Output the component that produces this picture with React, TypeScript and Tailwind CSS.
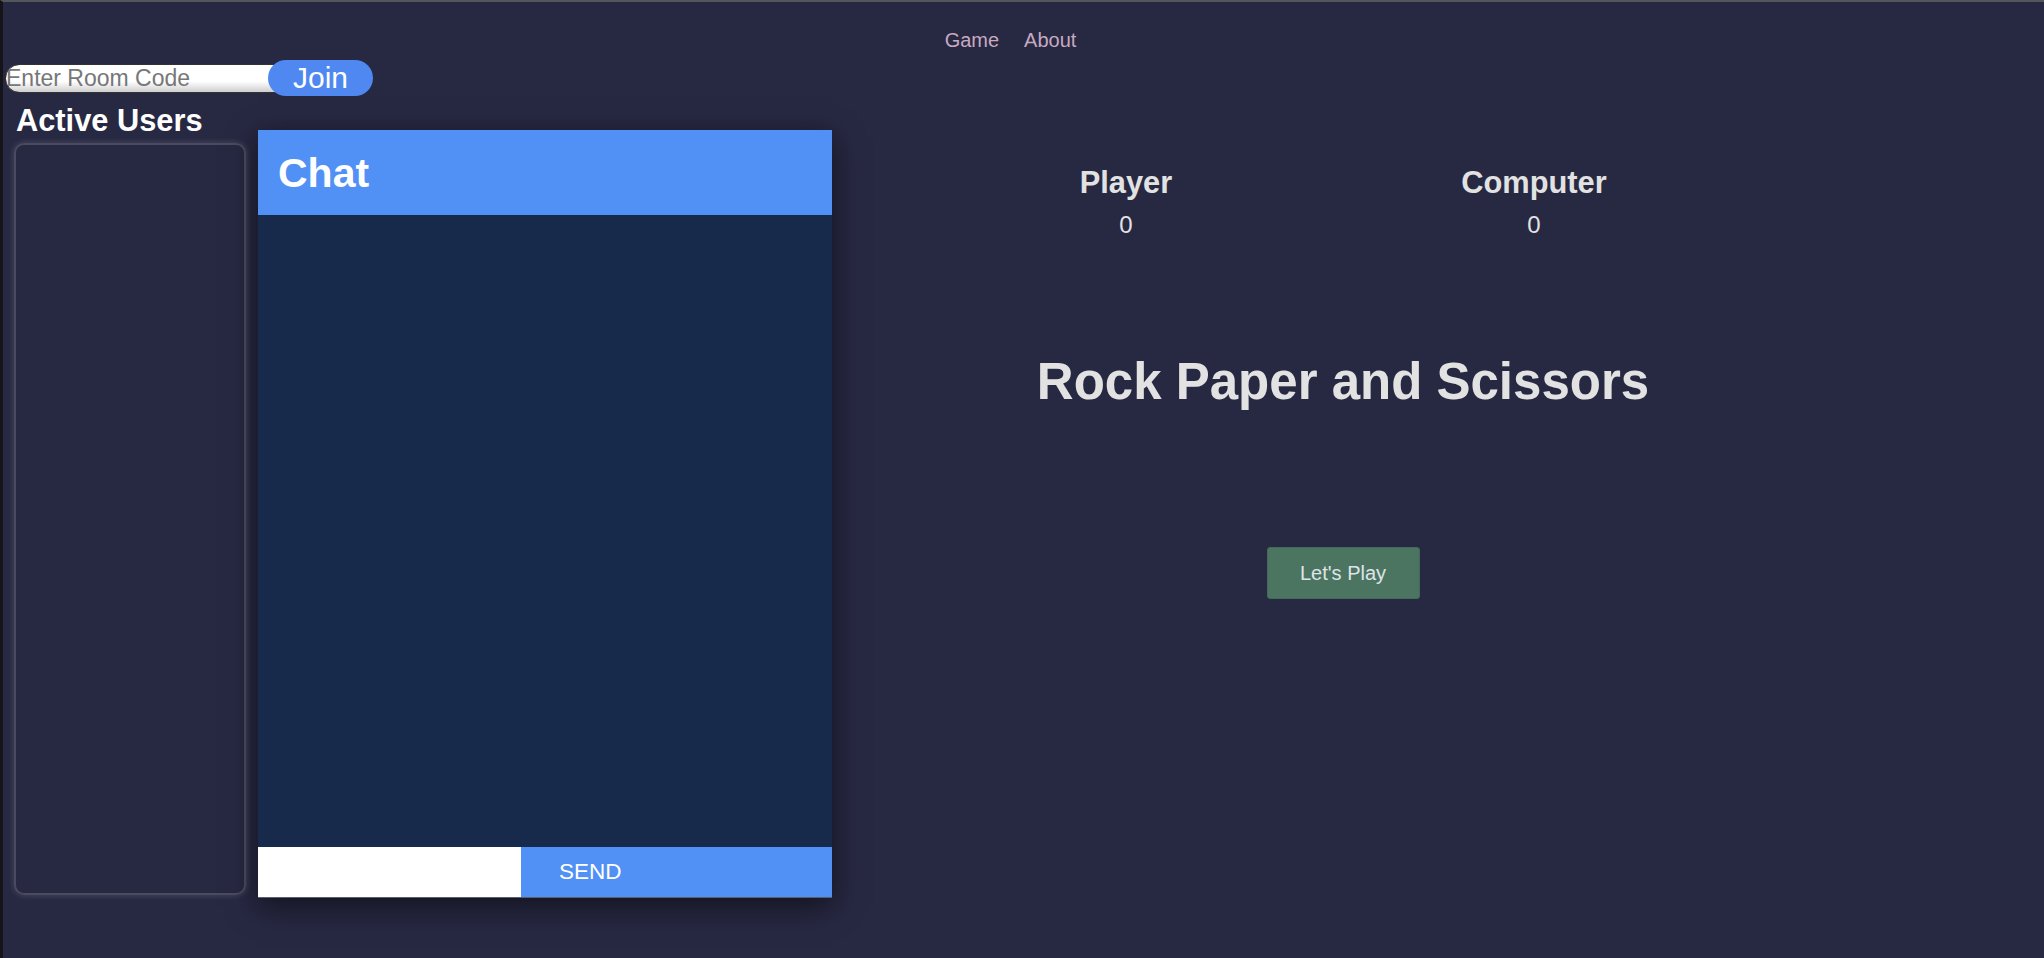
export default function App() {
  return (
    <div
      className="min-h-screen w-full bg-[#272842] border-t-2 border-t-[#55565c] border-l-[3px] border-l-[#141419] overflow-hidden"
      style={{ fontFamily: '"Liberation Sans", Arial, sans-serif' }}
    >
      {/* Top nav */}
      <nav className="flex justify-center gap-[25px] pt-[27px] pr-[26px] text-[20px] leading-[23px] text-[#c8aac0]">
        <a href="#">Game</a>
        <a href="#">About</a>
      </nav>

      {/* Room code */}
      <div className="flex items-center mt-[8px] ml-[2px]">
        <input
          type="text"
          placeholder="Enter Room Code"
          className="w-[275px] h-[29px] bg-gradient-to-b from-white from-60% to-[#cfcfcf] border border-[#333] rounded-l-full text-[23px] text-[#444] placeholder:text-[#777] outline-none px-0"
        />
        <button className="-ml-3 h-[36px] w-[105px] rounded-full bg-[#4e88f0] text-white text-[30px] leading-none">
          Join
        </button>
      </div>

      {/* Main */}
      <div className="flex">
        {/* Active users */}
        <div className="ml-[11px] w-[232px] flex flex-col">
          <h2 className="mt-[8px] pl-[2px] text-[30.8px] leading-[34.5px] font-bold text-white">
            Active Users
          </h2>
          <div className="mt-[4px] h-[752px] rounded-[10px] border-2 border-[#4a4b5e] shadow-[0_0_6px_rgba(255,255,255,0.18)]" />
        </div>

        {/* Chat */}
        <div className="ml-[12px] mt-[34px] w-[574px] h-[768px] flex flex-col shadow-[0_8px_28px_rgba(0,0,0,0.55)]">
          <div className="h-[85px] bg-[#5190f5] flex items-center pl-[20px]">
            <h2 className="text-[41px] font-bold text-white leading-[46px]">Chat</h2>
          </div>
          <div className="flex-1 bg-[#182a4b]" />
          <div className="h-[51px] flex border-b border-[#5a5f70]">
            <input type="text" className="w-[263px] h-full bg-white outline-none px-2 text-[18px]" />
            <button className="flex-1 h-full bg-[#5190f5] text-white text-[22.5px] text-left pl-[38px]">
              SEND
            </button>
          </div>
        </div>

        {/* Game */}
        <div className="ml-[10px] w-[1002px] flex flex-col items-center text-[#e2e2e2]">
          <div className="self-start ml-[80px] mt-[70px] w-[816px] grid grid-cols-2">
            <div className="flex flex-col items-center">
              <h3 className="text-[30.8px] leading-[34.5px] font-bold">Player</h3>
              <span className="mt-[10px] text-[24px] leading-[27.6px]">0</span>
            </div>
            <div className="flex flex-col items-center">
              <h3 className="text-[30.8px] leading-[34.5px] font-bold">Computer</h3>
              <span className="mt-[10px] text-[24px] leading-[27.6px]">0</span>
            </div>
          </div>
          <h1 className="mt-[115px] text-[51px] leading-[57.5px] font-bold">Rock Paper and Scissors</h1>
          <button className="mt-[136px] w-[153px] h-[52px] rounded-[3px] bg-[#4b7561] border border-[#42695a] text-[20px] text-[#dfe4ea]">
            Let's Play
          </button>
        </div>
      </div>
    </div>
  );
}
